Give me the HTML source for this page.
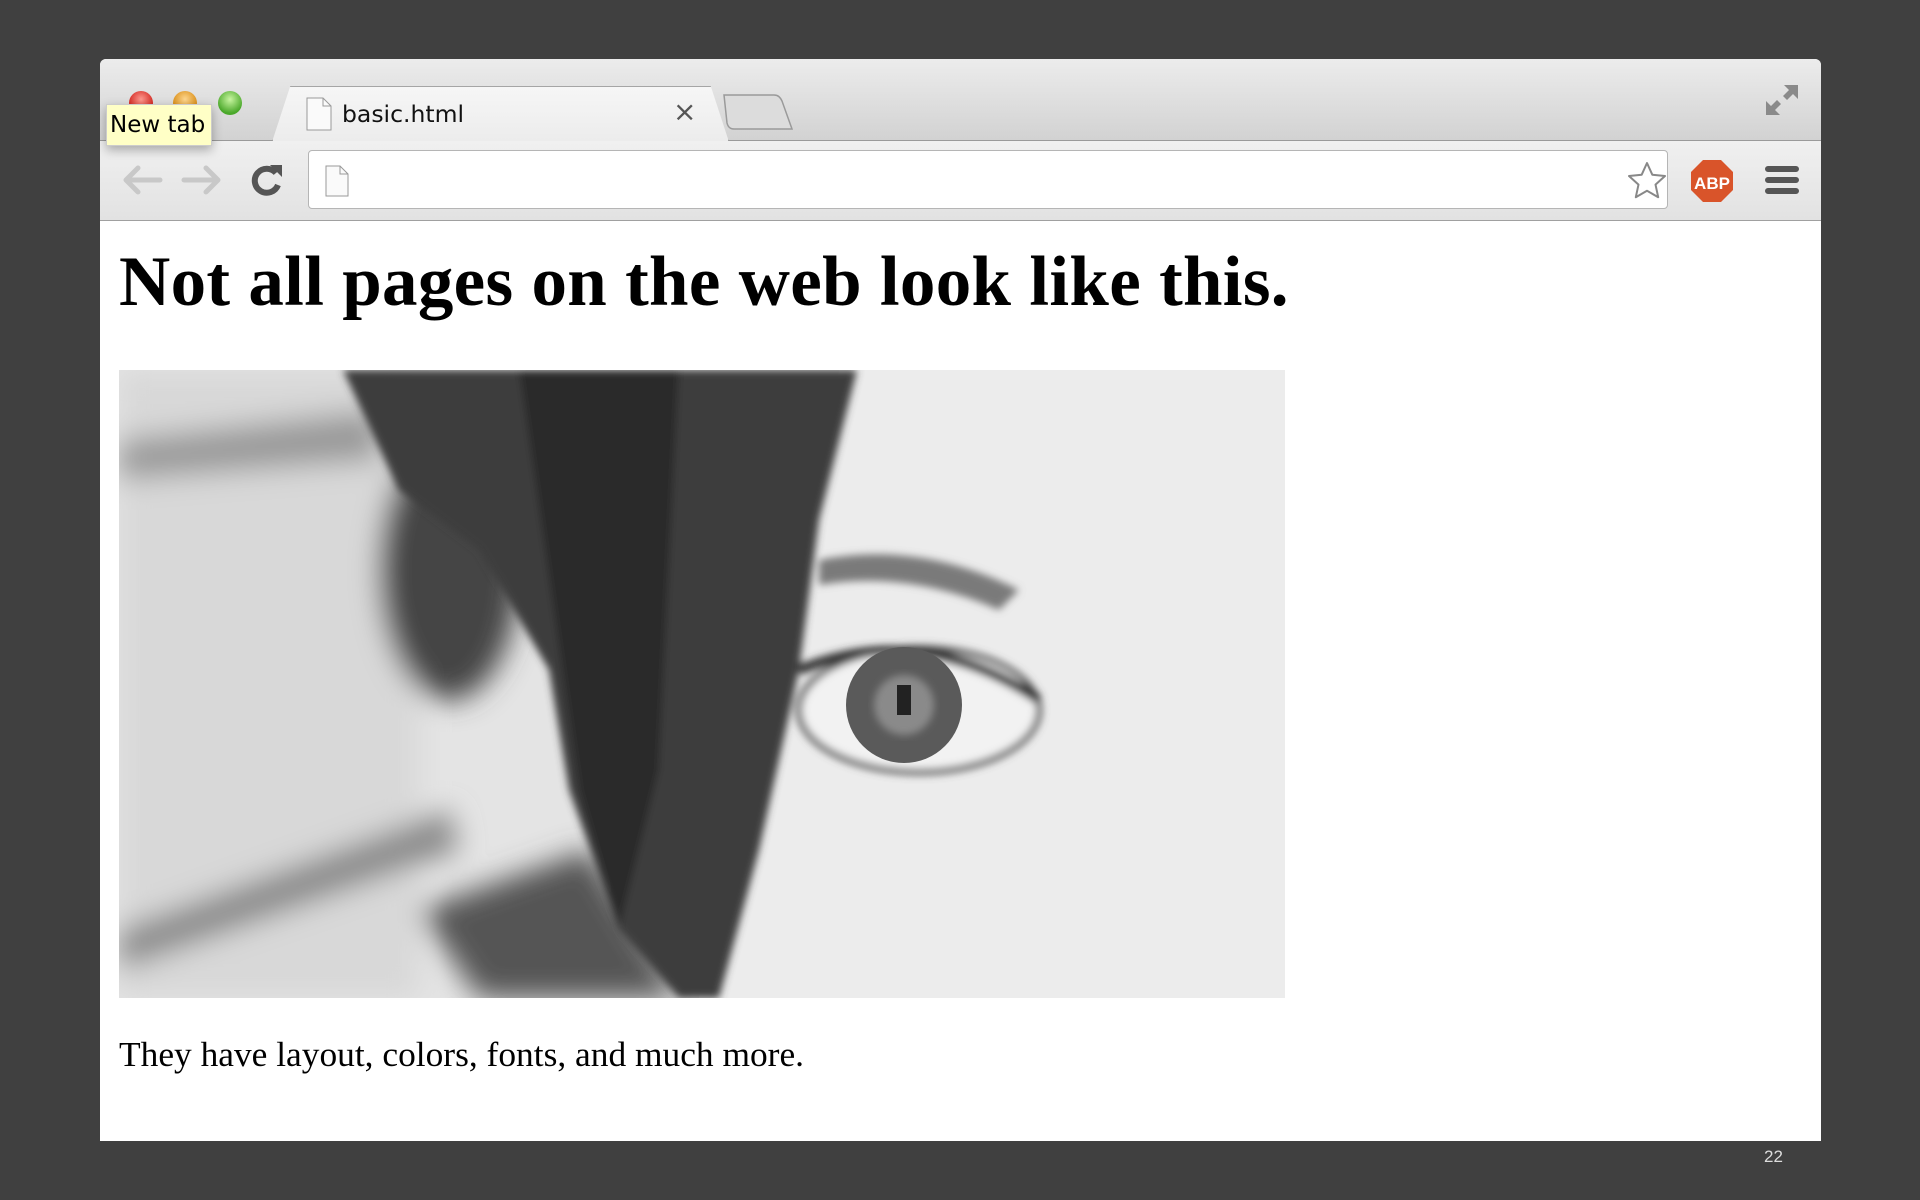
<!DOCTYPE html>
<html><head><meta charset="utf-8"><style>
*{margin:0;padding:0;box-sizing:border-box}
body{width:1920px;height:1200px;background:#404040;position:relative;overflow:hidden;font-family:"Liberation Sans",sans-serif}
.win{position:absolute;left:100px;top:59px;width:1721px;height:1082px;background:#fff;border-radius:6px 6px 0 0;overflow:hidden}
.tabstrip{position:absolute;left:0;top:0;width:100%;height:82px;background:linear-gradient(#ececec,#d2d2d2);border-bottom:1px solid #9a9a9a}
.toolbar{position:absolute;left:0;top:82px;width:100%;height:80px;background:linear-gradient(#f0f0f0,#e2e2e2);border-bottom:1px solid #a0a0a0}
.light{position:absolute;top:32px;width:24px;height:24px;border-radius:50%}
.tab{position:absolute;left:172px;top:27px;width:457px;height:56px;background:linear-gradient(#f6f6f6,#ececec);border:1px solid #a5a5a5;border-bottom:none;border-radius:10px 10px 0 0;clip-path:polygon(0 100%,4% 0,96% 0,100% 100%)}
.omni{position:absolute;left:208px;top:9px;width:1360px;height:59px;background:#fff;border:1px solid #b5b5b5;border-radius:4px}
h1{position:absolute;left:19px;top:183px;font-family:"Liberation Serif",serif;font-weight:bold;font-size:71px;color:#000;white-space:nowrap;letter-spacing:0.3px}
p{position:absolute;left:19px;top:974px;font-family:"Liberation Serif",serif;font-size:35.4px;color:#000;white-space:nowrap}
</style></head><body>
<div class="win">
 <div class="tabstrip">
  <div class="light" style="left:29px;background:radial-gradient(circle at 50% 35%,#ff9a90,#d0201a 70%)"></div>
  <div class="light" style="left:73px;background:radial-gradient(circle at 50% 35%,#ffd890,#d88a10 70%)"></div>
  <div class="light" style="left:118px;background:radial-gradient(circle at 50% 35%,#c8f5a0,#4aa82a 70%)"></div>
  <div class="tab"></div>
  <svg style="position:absolute;left:205px;top:38px" width="28" height="34"><path d="M2 1h16l8 8v24H2z" fill="#fafafa" stroke="#999"/><path d="M18 1v8h8" fill="none" stroke="#999"/></svg>
  <div style="position:absolute;left:242px;top:41px;font-size:23.5px;color:#111;font-family:'DejaVu Sans',sans-serif">basic.html</div>
  <div style="position:absolute;left:573px;top:36px;font-size:28px;color:#555;font-family:'DejaVu Sans',sans-serif">×</div>
  <svg style="position:absolute;left:620px;top:34px" width="76" height="40"><path d="M4 2h50c4 0 6 2 8 6l10 28H14c-4 0-6-2-7-6z" fill="#dcdcdc" stroke="#9a9a9a" stroke-width="1.5"/></svg>
  <svg style="position:absolute;left:1664px;top:24px" width="36" height="34"><path d="M20 2h14v14l-5-5-6 6-4-4 6-6zM16 32H2V18l5 5 6-6 4 4-6 6z" fill="#8a8a8a"/></svg>
 </div>
 <div style="position:absolute;left:6px;top:45px;width:106px;height:42px;background:#ffffc6;border:1px solid #ccc;box-shadow:0 4px 10px rgba(0,0,0,.3);font-family:'DejaVu Sans',sans-serif;font-size:23px;line-height:40px;padding-left:3px;color:#000;z-index:3">New tab</div>
 <div class="toolbar">
  <svg style="position:absolute;left:20px;top:20px" width="130" height="40"><g fill="none" stroke="#c8c8c8" stroke-width="5" stroke-linecap="round" stroke-linejoin="round"><path d="M40 19H6M18 7L6 19l12 12"/><path d="M64 19h34M86 7l12 12-12 12"/></g></svg>
  <svg style="position:absolute;left:150px;top:22px" width="34" height="34"><path d="M26 10A12 12 0 1 0 28 22" fill="none" stroke="#555" stroke-width="6"/><path d="M20 2l12 0 0 12z" fill="#555"/></svg>
  <div class="omni"><svg style="position:absolute;left:15px;top:14px" width="26" height="32"><path d="M2 1h14l8 8v22H2z" fill="#fafafa" stroke="#999"/><path d="M16 1v8h8" fill="none" stroke="#999"/></svg>
   <svg style="position:absolute;left:1318px;top:10px" width="40" height="40"><path d="M20 2l5.3 11.7 12.7 1.3-9.5 8.6 2.7 12.6L20 29.8 8.8 36.2l2.7-12.6L2 15l12.7-1.3z" fill="#fff" stroke="#888" stroke-width="2" stroke-linejoin="round"/></svg></div>
  <svg style="position:absolute;left:1590px;top:18px" width="44" height="44"><path d="M13 1h18l12 12v18L31 43H13L1 31V13z" fill="#d9542a"/><text x="22" y="30" font-size="17" font-weight="bold" fill="#fff" text-anchor="middle" font-family="Liberation Sans">ABP</text></svg>
  <svg style="position:absolute;left:1664px;top:24px" width="36" height="32"><g stroke="#555" stroke-width="6" stroke-linecap="round"><path d="M4 4h28M4 15h28M4 26h28"/></g></svg>
 </div>
 <svg style="position:absolute;left:19px;top:311px" width="1166" height="628" viewBox="0 0 1166 628">
  <defs><filter id="b"><feGaussianBlur stdDeviation="14"/></filter><filter id="s"><feGaussianBlur stdDeviation="4"/></filter></defs>
  <rect width="1166" height="628" fill="#e4e4e4"/>
  <g filter="url(#b)">
   <rect x="0" y="0" width="300" height="628" fill="#d8d8d8"/>
   <path d="M0 70 L260 40 L260 90 L0 110z" fill="#9a9a9a"/>
   <path d="M0 560 L330 440 L340 480 L0 600z" fill="#8a8a8a"/>
   <ellipse cx="330" cy="200" rx="70" ry="130" fill="#444"/>
   <path d="M300 540 L470 480 L560 628 L360 628z" fill="#555"/>
  </g>
  <path d="M720 0 H1166 V628 H580z" fill="#ececec"/>
  <g filter="url(#s)">
   <path d="M224 0 L738 0 L700 150 L680 300 L640 480 L600 628 L560 628 L500 560 L450 420 L430 300 L360 180 L280 120z" fill="#3e3e3e"/>
   <path d="M400 0 L560 0 L540 400 L500 560 L460 420z" fill="#2a2a2a"/>
   <path d="M700 190 Q800 170 900 220 L880 240 Q790 200 700 215z" fill="#7a7a7a"/>
   <ellipse cx="800" cy="340" rx="120" ry="62" fill="#f2f2f2" stroke="#555" stroke-width="6"/>
   <path d="M680 300 Q800 250 920 330" fill="none" stroke="#333" stroke-width="10"/>
  </g>
  <circle cx="785" cy="335" r="58" fill="#5a5a5a"/>
  <circle cx="785" cy="335" r="30" fill="#8a8a8a" filter="url(#s)"/>
  <rect x="778" y="315" width="14" height="30" fill="#222"/>
 </svg>
 <h1>Not all pages on the web look like this.</h1>
 <p>They have layout, colors, fonts, and much more.</p>
</div>
<div style="position:absolute;left:1764px;top:1147px;font-size:17px;color:#ddd">22</div>
</body></html>
